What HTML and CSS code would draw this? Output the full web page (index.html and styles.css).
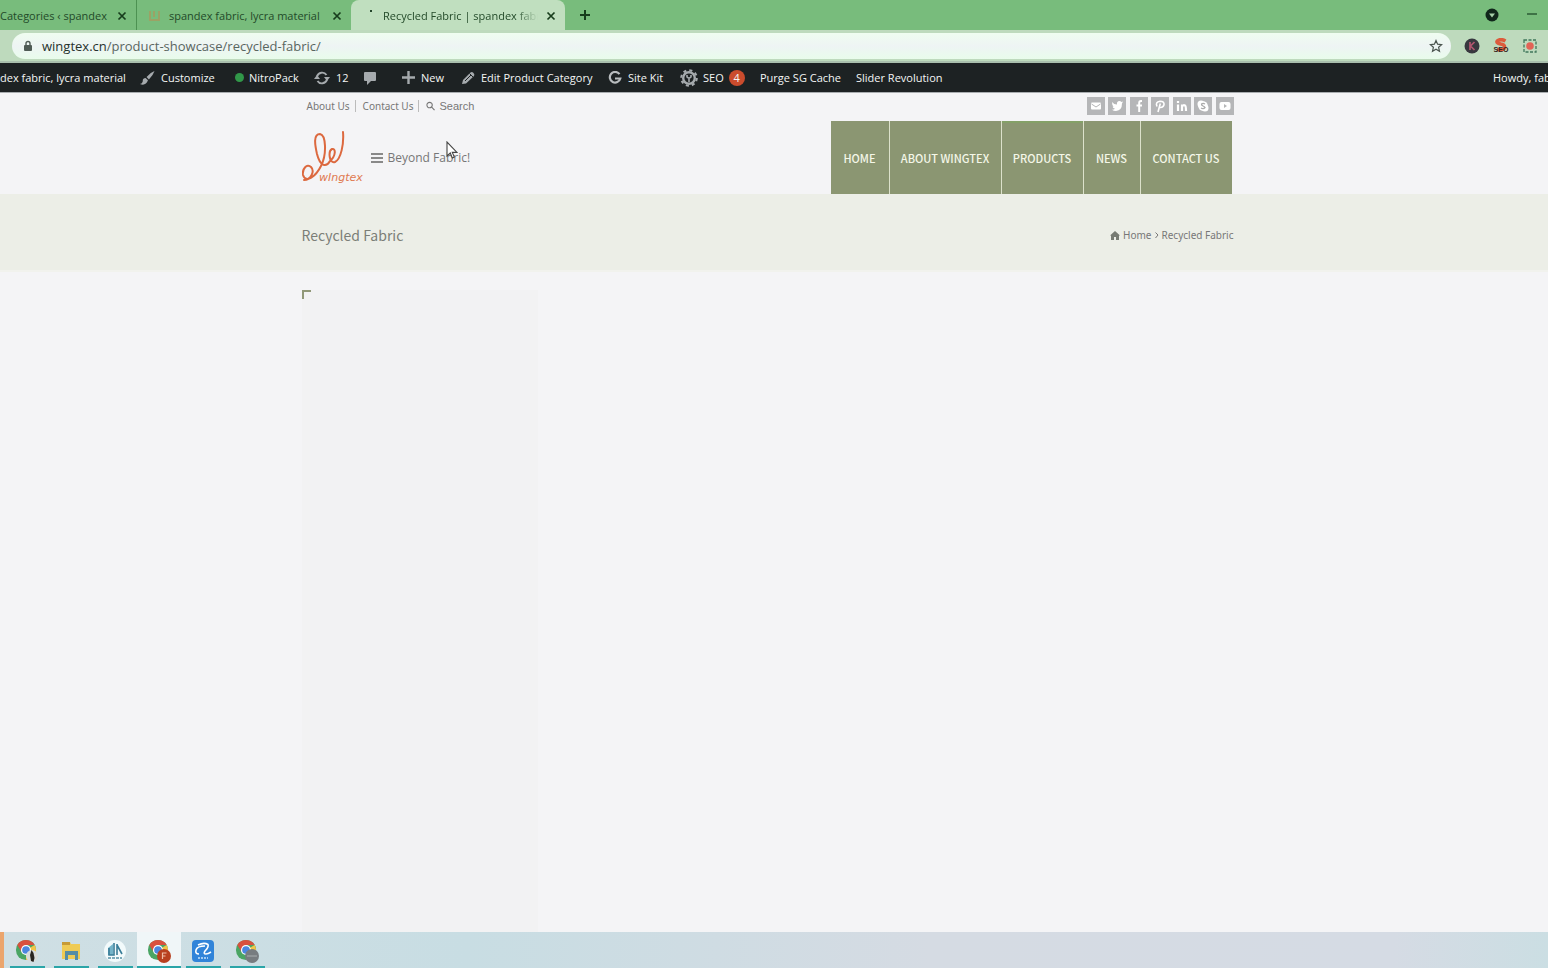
FILE: index.html
```html
<!DOCTYPE html>
<html lang="en">
<head>
<meta charset="utf-8">
<title>Recycled Fabric</title>
<link rel="stylesheet" href="styles.css">
</head>
<body>
<svg class="defs" aria-hidden="true">
  <defs>
    <symbol id="close" viewBox="0 0 10 10"><path d="M1.5 1.5l7 7M8.5 1.5l-7 7" stroke="#173d1c" stroke-width="1.7" fill="none"/></symbol>
    <symbol id="chrome" viewBox="0 0 24 24">
      <circle cx="12" cy="12" r="11" fill="#4aa564"/>
      <path d="M12 12L21.5 6.5A11 11 0 0 1 12 23Z" fill="#f3c548"/>
      <path d="M2.5 6.5A11 11 0 0 1 21.5 6.5H12L7 14Z" fill="#d9503f"/>
      <circle cx="12" cy="12" r="5.5" fill="#fff"/><circle cx="12" cy="12" r="4.2" fill="#4b86e0"/>
    </symbol>
  </defs>
</svg>
<header class="browser">
  <div class="tabs">
    <div class="tab tab-first"><span class="tab-title">Categories ‹ spandex</span><button class="tab-close" aria-label="Close tab"><svg width="10" height="10"><use href="#close"/></svg></button></div>
    <div class="tab"><svg class="favicon" width="16" height="16" viewBox="0 0 16 16"><path d="M3 3v9h10M7 3v6M12 3v8" fill="none" stroke="#c08a50" stroke-width="2"/></svg><span class="tab-title">spandex fabric, lycra material</span><button class="tab-close" aria-label="Close tab"><svg width="10" height="10"><use href="#close"/></svg></button></div>
    <div class="tab tab-active"><svg class="favicon" width="16" height="16" viewBox="0 0 16 16"><rect x="9" y="3" width="2" height="2" fill="#23452a"/></svg><span class="tab-title">Recycled Fabric | spandex fabr</span><button class="tab-close" aria-label="Close tab"><svg width="10" height="10"><use href="#close"/></svg></button></div>
    <button class="new-tab" aria-label="New tab"><svg width="12" height="12" viewBox="0 0 12 12"><path d="M6 1v10M1 6h10" stroke="#173d1c" stroke-width="2"/></svg></button>
    <div class="window-buttons">
      <button aria-label="Search tabs"><svg width="14" height="14" viewBox="0 0 14 14"><circle cx="7" cy="7" r="6.5" fill="#10261a"/><path d="M4 5.5h6L7 9.5z" fill="#a6cfa8"/></svg></button>
      <button aria-label="Minimize"><svg width="10" height="10" viewBox="0 0 10 10"><path d="M0 4h10" stroke="#2b5b34" stroke-width="1.5"/></svg></button>
    </div>
  </div>
  <div class="toolbar">
    <div class="address">
      <svg width="10" height="12" viewBox="0 0 10 12"><rect x="1" y="5" width="8" height="6" rx="1" fill="#4f5b55"/><path d="M3 5V3.500a2 2 0 0 1 4 0V5" fill="none" stroke="#4f5b55" stroke-width="1.400"/></svg>
      <span class="url"><b>wingtex.cn</b>/product-showcase/recycled-fabric/</span>
      <button aria-label="Bookmark"><svg width="14" height="14" viewBox="0 0 14 14"><path d="M7 1.500l1.600 3.700 4 .4-3 2.700.9 4L7 10.200l-3.500 2.100.9-4-3-2.700 4-.4z" fill="none" stroke="#4a544e" stroke-width="1.200"/></svg></button>
    </div>
    <div class="extensions">
      <svg width="16" height="16" viewBox="0 0 16 16"><circle cx="8" cy="8" r="7.500" fill="#38383f"/><path d="M6 4v8M10.500 4L6.500 8l4 4" fill="none" stroke="#b2566f" stroke-width="1.700"/></svg>
      <svg width="16" height="16" viewBox="0 0 16 16"><path d="M12.500 3Q8 .5 5 2.500T7.500 6q4.500.5 4 3.500T4 11.500" fill="none" stroke="#dc5b3c" stroke-width="3.600"/><text class="seo-mark" x="8" y="14" text-anchor="middle">SEO</text></svg>
      <svg width="16" height="16" viewBox="0 0 16 16"><rect x="2" y="2" width="12" height="12" fill="none" stroke="#40775b" stroke-width="1.300" stroke-dasharray="3 1.500"/><circle cx="8" cy="8" r="3.800" fill="#e26457"/></svg>
    </div>
  </div>
</header>
<nav class="adminbar" aria-label="Admin">
  <a href="#">dex fabric, lycra material</a>
  <a href="#"><svg width="15" height="16" viewBox="0 0 16 16"><path d="M15.500 0.500Q11 2 7 7l2.500 2.500Q14 5 15.500.500zM6 8Q2.500 8.500 3 11.500 2.500 14 0 14.500 6 17 8.500 10.500z" fill="#a5aaad"/></svg>Customize</a>
  <a href="#" class="nitro"><i class="dot"></i>NitroPack</a>
  <a href="#"><svg width="16" height="14" viewBox="0 0 16 14"><path d="M3 5.500A5.300 5.300 0 0 1 12.500 4M13 8.500A5.300 5.300 0 0 1 3.500 10" fill="none" stroke="#a5aaad" stroke-width="1.900"/><path d="M10 6h6l-3 4zM0 8h6L3 4z" fill="#a5aaad"/></svg>12</a>
  <a href="#" aria-label="Comments"><svg width="14" height="14" viewBox="0 0 14 14"><path d="M2 1h10a1 1 0 0 1 1 1v7a1 1 0 0 1-1 1H8l-4 4v-4H2a1 1 0 0 1-1-1V2a1 1 0 0 1 1-1z" fill="#a5aaad"/></svg></a>
  <a href="#"><svg width="13" height="13" viewBox="0 0 13 13"><path d="M6.500 0v13M0 6.500h13" stroke="#a5aaad" stroke-width="2.400"/></svg>New</a>
  <a href="#"><svg width="14" height="14" viewBox="0 0 14 14"><path d="M1 13l1-4 7.500-7.500q1.500-1 3 .5t.5 3L5 12.500z" fill="#a5aaad"/><path d="M4 10l6-6M8.500 2.500l3.500 3.500" fill="none" stroke="#1d2223"/></svg>Edit Product Category</a>
  <a href="#"><svg width="14" height="14" viewBox="0 0 14 14"><path d="M11.500 3.200A5.300 5.300 0 1 0 12.300 7.500H7" fill="none" stroke="#b8bcbe" stroke-width="2.200"/></svg>Site Kit</a>
  <a href="#" class="seo"><svg width="18" height="18" viewBox="0 0 18 18"><circle cx="9" cy="9" r="7.800" fill="none" stroke="#a5aaad" stroke-width="2" stroke-dasharray="3.100 3.030"/><circle cx="9" cy="9" r="5.800" fill="none" stroke="#a5aaad" stroke-width="2.400"/><path d="M7 6v2q2 2 4 0V6M9 9v4" fill="none" stroke="#a5aaad" stroke-width="1.600"/></svg>SEO<span class="badge">4</span></a>
  <a href="#">Purge SG Cache</a>
  <a href="#">Slider Revolution</a>
  <a href="#">Howdy, fab</a>
</nav>
<main class="site">
  <div class="wrap topbar">
    <div class="toplinks">
      <a href="#">About Us</a><a href="#">Contact Us</a>
      <a href="#" class="search"><svg width="9" height="10" viewBox="0 0 10 10"><circle cx="4" cy="4" r="3" fill="none" stroke="#777" stroke-width="1.200"/><path d="M6 6l3.500 3.500" stroke="#777" stroke-width="1.300"/></svg>Search</a>
    </div>
    <div class="social">
      <a href="#" aria-label="Email"><svg viewBox="0 0 18 18"><rect x="4" y="5.500" width="10" height="7" rx="1" fill="#fff"/><path d="M4.500 7l4.500 3 4.500-3" fill="none" stroke="#b5b6b8"/></svg></a>
      <a href="#" aria-label="Twitter"><svg viewBox="0 0 18 18"><path d="M4 5q2 2.500 5 2.500Q8.500 4 11.500 4q1 0 2 1l1.500-.5-1 2Q14 13.500 8 14q-2.500 0-4-1.200 2 0 3-1-2-.6-2.500-2h1Q4 8.500 4 5z" fill="#fff"/></svg></a>
      <a href="#" aria-label="Facebook"><svg viewBox="0 0 18 18"><path d="M12 4h-1Q9.200 4 9.200 6v9M6.500 8.500H12" fill="none" stroke="#fff" stroke-width="2"/></svg></a>
      <a href="#" aria-label="Pinterest"><svg viewBox="0 0 18 18"><path d="M6 9.500Q4 5 9 4.300q4.500 0 4 3.500-1 3.500-4.500 2.500M9.300 6.500L7 15" fill="none" stroke="#fff" stroke-width="1.600"/></svg></a>
      <a href="#" aria-label="LinkedIn"><svg viewBox="0 0 18 18"><path d="M5 7.500V14M5 4v2M9 14V7.500M9 10q1-2.500 3-1.500 1 .5 1 5.500" fill="none" stroke="#fff" stroke-width="2.200"/></svg></a>
      <a href="#" aria-label="Skype"><svg viewBox="0 0 18 18"><circle cx="7" cy="7" r="3.500" fill="#fff"/><circle cx="11" cy="11" r="3.500" fill="#fff"/><circle cx="9" cy="9" r="4.800" fill="#fff"/><path d="M11 7Q9 5.800 7.500 7q0 1.500 1.500 2t2 1.500Q9.500 12.500 7 11" fill="none" stroke="#aaa" stroke-width="1.300"/></svg></a>
      <a href="#" aria-label="YouTube"><svg viewBox="0 0 18 18"><rect x="3.500" y="5" width="11" height="8" rx="2" fill="#fff"/><path d="M8 7v4l3-2z" fill="#b5b6b8"/></svg></a>
    </div>
  </div>
  <div class="wrap masthead">
    <a href="#" class="logo" aria-label="wingtex"><svg width="62" height="56" viewBox="0 0 62 56">
      <path d="M2 50C9 50 13 41 9 37C5 33 0 39 1 45C4 54 14 46 19 36C25 24 24 5 18 4C11 4 13 15 15 24C18 36 24 38 28 31C34 26 34 18 30 19C26 21 27 34 33 32C39 29 42 14 41 2" fill="none" stroke="#dc693f" stroke-width="2" stroke-linecap="round"/>
      <text class="logo-text" x="17" y="51">wIngtex</text></svg></a>
    <div class="tagline"><svg width="12" height="10" viewBox="0 0 12 10"><path d="M0 1h12M0 5h12M0 9h12" stroke="#666" stroke-width="1.500"/></svg>Beyond Fabric!
      <svg class="cursor" width="12" height="18" viewBox="0 0 12 18"><path d="M1 1v14l3.300-3 2 5 2-1-2-4.600H11z" fill="#fff" stroke="#444" stroke-width="1.100"/></svg></div>
    <nav class="menu"><a href="#">HOME</a><a href="#">ABOUT WINGTEX</a><a href="#" class="current">PRODUCTS</a><a href="#">NEWS</a><a href="#">CONTACT US</a></nav>
  </div>
  <div class="banner">
    <div class="wrap banner-row">
      <h1>Recycled Fabric</h1>
      <div class="crumbs"><svg width="10" height="9" viewBox="0 0 10 9"><path d="M5 0l5 4.500H9V9H6V6H4v3H1V4.500H0z" fill="#777b73"/></svg><a href="#">Home</a><svg width="4" height="7" viewBox="0 0 4 7"><path d="M.5.500l2.500 2.500L.5 6" fill="none" stroke="#777"/></svg><span>Recycled Fabric</span></div>
    </div>
  </div>
  <div class="wrap content"><aside class="sidebar"></aside></div>
</main>
<footer class="taskbar">
  <button aria-label="Chrome"><svg width="24" height="24" viewBox="0 0 24 24"><use href="#chrome" width="22" height="22"/><circle cx="17" cy="17" r="6" fill="#d9dcda"/><path d="M16 22l-1-6 1.500-5 2 3 1 5-1 4z" fill="#28241f"/></svg></button>
  <button aria-label="File Explorer"><svg width="24" height="24" viewBox="0 0 24 24"><path d="M3 3h8l1 2h9v15H3z" fill="#efcb55"/><path d="M3 3h8v3H3z" fill="#c79b36"/><path d="M6 12h13v9h-3v-5H9v5H6z" fill="#568da5"/></svg></button>
  <button aria-label="Capture"><svg width="24" height="24" viewBox="0 0 24 24"><circle cx="12" cy="12" r="11" fill="#f2fafb"/><path d="M10 5L5 9v7h5z" fill="#74b4c9"/><path d="M11 4v12H6V9M14 5v11M14 6l5 9" fill="none" stroke="#397d98" stroke-width="1.600"/><path d="M5 19h14" stroke="#5690a5" stroke-width="1.500" stroke-dasharray="3 1"/></svg></button>
  <button class="active" aria-label="Chrome profile F"><svg width="24" height="24" viewBox="0 0 24 24"><use href="#chrome" width="22" height="22"/><circle cx="17" cy="17" r="7" fill="#b8401f"/><path d="M15.500 20v-6h4M15.500 17h3" fill="none" stroke="#f0bea8" stroke-width="1.200"/></svg></button>
  <button aria-label="Alibaba"><svg width="24" height="24" viewBox="0 0 24 24"><rect x="1" y="1" width="22" height="22" rx="4" fill="#3184d9"/><path d="M7 6Q13 3 17 5.500 18 8 14 12q-2 3 1 3 2 0 5-2M14 7Q6 7 5 11q-1 4 3 4" fill="none" stroke="#fff" stroke-width="1.600"/><path d="M7 19h10" stroke="#c6e1fa" stroke-width="1.500" stroke-dasharray="2 1"/></svg></button>
  <button aria-label="Chrome profile"><svg width="24" height="24" viewBox="0 0 24 24"><use href="#chrome" width="22" height="22"/><circle cx="17" cy="17" r="7" fill="#777c80"/><path d="M12 17h10" stroke="#a9adaf"/></svg></button>
</footer>
</body>
</html>
```
FILE: styles.css
```css
* { box-sizing: border-box; }
body { margin: 0; min-height: 100vh; display: flex; flex-direction: column; overflow: hidden; font-family: "Open Sans", sans-serif; font-size: 11px; background: #f4f4f6; }
button { border: 0; padding: 0; background: none; display: flex; align-items: center; justify-content: center; }
a { color: inherit; text-decoration: none; }
svg { flex: none; }
.defs { position: absolute; width: 0; height: 0; }

.tabs { display: flex; height: 30px; background: #78bc7c; color: #234a29; }
.tab { display: flex; align-items: center; width: 214px; padding: 1px 9px 0 10px; }
.tab-first { width: 137px; padding-left: 0; border-right: 1px solid #4d9152; }
.tab-active { background: #c0dfbf; border-radius: 8px 8px 0 0; }
.tab-title { flex: 1; min-width: 0; white-space: nowrap; line-height: 18px; }
.tab-active .tab-title { mask-image: linear-gradient(90deg, #000 85%, transparent); }
.tab-close { width: 10px; height: 10px; margin-left: 8px; }
.favicon { margin-right: 6px; opacity: .5; }
.tab-active .favicon { opacity: 1; align-self: flex-start; margin-top: 6px; }
.new-tab { width: 40px; }
.window-buttons { display: flex; gap: 28px; margin-left: auto; padding-right: 11px; }

.toolbar { display: flex; align-items: center; gap: 13px; height: 33px; padding: 0 10px 0 12px; background: #bedabd; border-bottom: 2px solid #a9bfad; }
.address { flex: 1; display: flex; align-items: center; gap: 9px; height: 26px; padding: 0 8px 0 11px; border-radius: 13px; background: linear-gradient(#effdf0, #eef4f4 50%, #e8fceb); }
.url { flex: 1; color: #59665f; font-size: 13px; }
.url b { font-weight: 400; color: #26322c; }
.extensions { display: flex; gap: 13px; }
.seo-mark { font: bold 7px "Liberation Sans", sans-serif; fill: #35221d; }

.adminbar { display: grid; grid-template-columns: 140px 95px 79px 49px 39px 59px 147px 72px 80px 96px 1fr 55px; height: 30px; align-items: center; background: #1d2223; color: #f4f6f5; border-bottom: 1px solid #a9adb0; white-space: nowrap; overflow: hidden; }
.adminbar a { display: flex; align-items: center; gap: 6px; }
.adminbar .nitro, .adminbar .seo { gap: 5px; }
.dot { width: 9px; height: 9px; border-radius: 50%; background: #319849; }
.badge { width: 16px; height: 16px; border-radius: 50%; background: #ca4c2d; text-align: center; line-height: 16px; }

.site { flex: 1; display: flex; flex-direction: column; color: #777; }
.wrap { width: 100%; max-width: 945px; margin: 0 auto; padding-right: 13px; }
.topbar { display: flex; align-items: center; justify-content: space-between; height: 28px; padding-bottom: 2px; }
.toplinks { display: flex; align-items: center; padding-left: 5px; font-family: "Noto Sans", sans-serif; font-size: 10px; line-height: 12px; }
.toplinks a { padding-right: 5px; margin-right: 7px; border-right: 1px solid #bbb; }
.toplinks .search { display: flex; align-items: center; gap: 4px; border: 0; font: 11px "Liberation Sans", sans-serif; }
.social { display: flex; justify-content: space-between; width: 147px; }
.social a { width: 18px; height: 18px; background: #b5b6b8; }
.social svg { display: block; }
.masthead { display: flex; align-items: center; height: 73px; }
.logo { display: flex; }
.logo-text { font: italic 11px "DejaVu Sans", sans-serif; fill: #e07a50; }
.tagline { position: relative; display: flex; align-items: center; gap: 5px; margin-left: 7px; font-family: "Open Sans", sans-serif; font-size: 12px; }
.cursor { position: absolute; left: 75px; top: -8px; }
.menu { display: grid; grid-template-columns: 58px 111px 81px 56px 91px; align-self: stretch; gap: 1px; margin-left: auto; margin-right: 2px; font: 500 11px "Noto Sans CJK SC", sans-serif; color: #f4f7e8; background: #dce1cb; }
.menu a { display: flex; align-items: center; justify-content: center; background: #8b9672; white-space: nowrap; }
.menu .current { border-top: 2px solid #84a068; border-bottom: 2px solid #8b9672; }
.banner { background: #eceee7; border-bottom: 2px solid #f1f2ed; }
.banner-row { display: flex; align-items: center; justify-content: space-between; height: 76px; padding-top: 6px; }
h1 { margin: 0; font: 14px "Noto Sans CJK SC", sans-serif; color: #7b7e77; }
.crumbs { display: flex; align-items: center; gap: 3px; font: 10px "Noto Sans", sans-serif; }
.content { flex: 1; display: flex; padding-top: 18px; }
.sidebar { width: 236px; background: linear-gradient(#919878, #919878) 0 0 / 9px 2px no-repeat, linear-gradient(#919878, #919878) 0 0 / 2px 9px no-repeat, #f2f2f3; }

.taskbar { display: flex; height: 36px; padding-left: 1px; border-left: 4px solid #eba56d; background: linear-gradient(90deg, #cfdfe4, #c8dde3 30%, #d5dbe3 60%, #d5dbe4 90%, #cbdee3); }
.taskbar button { width: 44px; padding-top: 2px; background: linear-gradient(#2aa5a8, #2aa5a8) center bottom / 35px 2px no-repeat; }
.taskbar .active { background: linear-gradient(#2aa5a8, #2aa5a8) center bottom / 44px 2px no-repeat, #f0f6f8; }
```
